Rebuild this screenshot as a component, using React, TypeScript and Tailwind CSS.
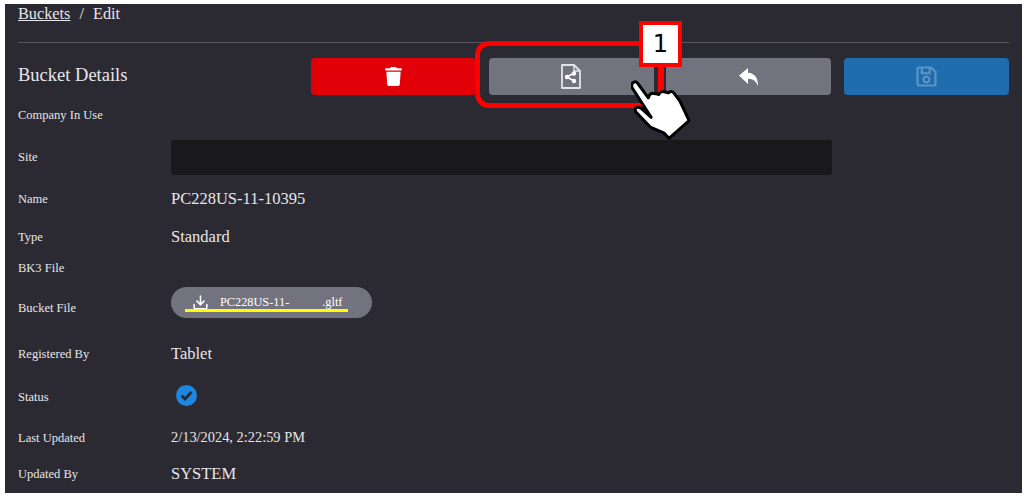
import { Download } from 'lucide-react'
import { FaRegSave, FaTrash } from 'react-icons/fa'

function ShareFileIcon() {
  return (
    <svg width="20" height="25" viewBox="0 0 20 25" fill="none">
      <path d="M1 1h12l6 6v17H1z" stroke="#e4e4e8" strokeWidth="1.8" strokeLinejoin="round" />
      <path d="M13 1v6h6" stroke="#e4e4e8" strokeWidth="1.4" />
      <path d="M13 9 6 13l7 4" stroke="#fff" strokeWidth="1.5" />
      <circle cx="13" cy="9.5" r="2.2" fill="#fff" />
      <circle cx="6" cy="13" r="2.2" fill="#fff" />
      <circle cx="13" cy="17" r="2.2" fill="#fff" />
    </svg>
  )
}

function ReplyIcon() {
  return (
    <svg width="19" height="18" viewBox="0 0 19 18" fill="#fff">
      <path d="M0 7.5 9 0v4.8c6 .2 10 4.200 10 13.200-2-5-5-7-10-7.200V16z" />
    </svg>
  )
}

function Hand() {
  return (
    <svg width="60" height="62" viewBox="0 0 64 66">
      <path
        d="M2 4c2-2 4-1.500 5.500 1l11 15c1-3 3-5 5-4.700 2 0 4.500 0 6 1.200 1.500-2.500 4-3.500 5.500-3 2 .2 3.500.5 5 1.200 2-2 4-1.700 6 .5l6 8 10 21-21.500 19-5-5.500-15-6.500L6 36c-2-2-2-5 0-5.700 2-.8 3.500 0 5 1l10.500 9.500L1 9c-.5-2 0-4 1-5z"
        fill="#fff"
        stroke="#000"
        strokeWidth="3.200"
        strokeLinejoin="round"
      />
    </svg>
  )
}

function Row({
  label,
  className,
  labelClass = '',
  children,
}: {
  label: string
  className: string
  labelClass?: string
  children?: React.ReactNode
}) {
  return (
    <div className={`flex items-center ${className}`}>
      <div className={`w-[153px] shrink-0 text-[12.500px] text-[#e6e6ea] ${labelClass}`}>{label}</div>
      {children}
    </div>
  )
}

export default function App() {
  return (
    <div className="h-[500px] w-[1028px] overflow-hidden bg-white pl-[5px] pr-[6px] pt-1 pb-[7px] font-['Liberation_Serif',serif]">
      <div className="relative h-full bg-[#2b2a32] pl-[13px] pr-[13px] text-[#e6e6ea]">
        <div className="flex h-[38px] items-start gap-[9px] text-[16.300px] leading-[19px]">
          <span className="underline">Buckets</span>
          <span>/</span>
          <span>Edit</span>
        </div>
        <div className="border-t border-[#55555c]" />

        <div className="mt-[15px] flex h-[37px] items-center">
          <h2 className="-mt-[2px] w-[293px] shrink-0 text-[18.500px]">Bucket Details</h2>
          <div className="flex gap-[12.670px]">
            <button className="flex h-[37px] w-[165px] items-center justify-center rounded-[4px] bg-[#e10008] text-white">
              <FaTrash size={19} />
            </button>
            <button className="flex h-[37px] w-[165px] items-center justify-center rounded-[4px] bg-[#73737f]">
              <ShareFileIcon />
            </button>
            <button className="flex h-[37px] w-[165px] items-center justify-center rounded-[4px] bg-[#73737f] text-white">
              <ReplyIcon />
            </button>
            <button className="flex h-[37px] w-[165px] items-center justify-center rounded-[4px] bg-[#1f6cae] text-[#5f95c6]">
              <FaRegSave size={23} />
            </button>
          </div>
        </div>

        <Row label="Company In Use" className="mt-[10px] h-[20px]" />
        <Row label="Site" labelClass="-mt-[1px]" className="mt-[15px] h-[35px]">
          <div className="h-[35px] w-[661px] rounded-[3px] bg-[#19191b]" />
        </Row>
        <Row label="Name" className="mt-[13px] h-[22px]">
          <span className="text-[16.500px]">PC228US-11-10395</span>
        </Row>
        <Row label="Type" className="mt-[16px] h-[22px]">
          <span className="text-[16.500px]">Standard</span>
        </Row>
        <Row label="BK3 File" className="mt-[11px] h-[18px]" />
        <Row label="Bucket File" labelClass="pt-[12px]" className="mt-[10px] h-[31px]">
          <div className="relative flex h-[31px] w-[201px] items-center rounded-full bg-[#73737f] pl-[21px] text-[12.300px] text-white">
            <Download size={17} strokeWidth={2.2} />
            <span className="ml-[11px]">PC228US-11-</span>
            <span className="ml-[33px]">.gltf</span>
            <div className="absolute left-[14px] top-[22px] h-[3px] w-[163px] bg-[#ffff00]" />
          </div>
        </Row>
        <Row label="Registered By" className="mt-[25px] h-[22px]">
          <span className="text-[16.500px]">Tablet</span>
        </Row>
        <Row label="Status" className="mt-[21px] h-[22px]">
          <div className="-mt-[4px] ml-[5px] flex h-[21px] w-[21px] items-center justify-center rounded-full bg-[#1c87e0]">
            <svg width="13" height="11" viewBox="0 0 13 11" fill="none">
              <path d="M1.500 5.500 5 9l6.500-7" stroke="#2b2a32" strokeWidth="2.800" />
            </svg>
          </div>
        </Row>
        <Row label="Last Updated" className="mt-[19px] h-[22px]">
          <span className="text-[14.400px]">2/13/2024, 2:22:59 PM</span>
        </Row>
        <Row label="Updated By" className="mt-[14px] h-[22px]">
          <span className="text-[16.500px]">SYSTEM</span>
        </Row>

        {/* callout over the share button */}
        <div className="absolute left-[470px] top-[37px] h-[67px] w-[189px] rounded-[14px] border-[5px] border-r-[6px] border-[#ff0000]" />
        <div className="absolute left-[634px] top-[17px] flex h-[46px] w-[43px] items-center justify-center border-[4px] border-[#ff0000] bg-white font-['DejaVu_Sans',sans-serif] text-[24px] leading-none text-black">
          1
        </div>
        <div className="absolute left-[626px] top-[75px]">
          <Hand />
        </div>
      </div>
    </div>
  )
}
